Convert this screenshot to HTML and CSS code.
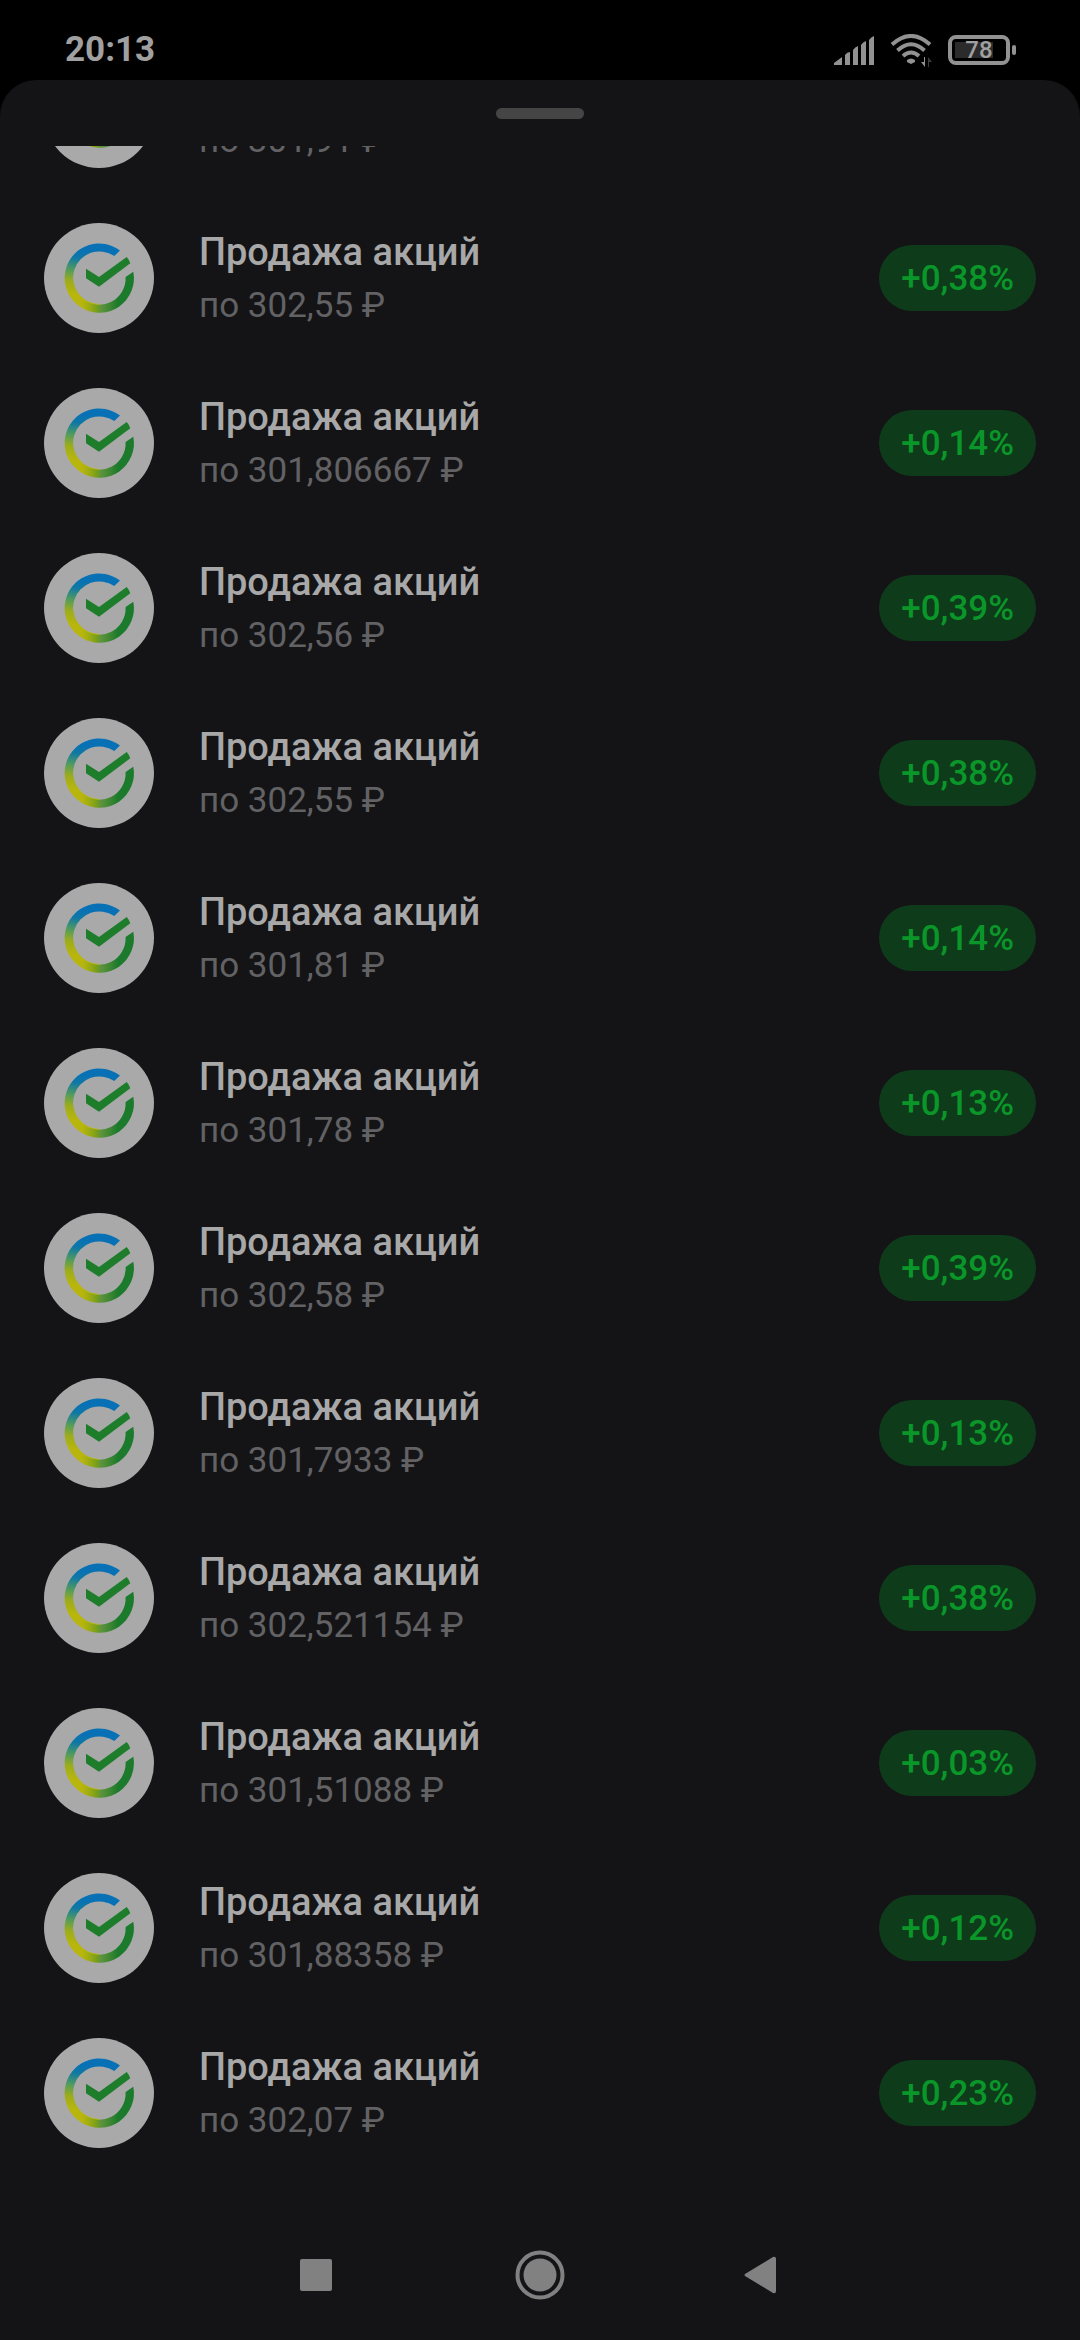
FILE: index.html
```
<!DOCTYPE html>
<html lang="ru">

<head>
    <meta charset="UTF-8">
    <meta name="viewport" content="width=device-width, initial-scale=1.0">
    <title>Продажа акций</title>
    <link rel="stylesheet" href="styles.css">
</head>

<body>
    <!-- Shared logo, used by every row -->
    <svg class="sprite" aria-hidden="true">
        <defs>
            <linearGradient id="ringSide" gradientUnits="userSpaceOnUse" x1="60" y1="24" x2="50" y2="84">
                <stop offset="0.1" stop-color="#0871b5" />
                <stop offset="0.25" stop-color="#0f78a4" />
                <stop offset="0.46" stop-color="#539c5c" />
                <stop offset="0.64" stop-color="#9cac1c" />
                <stop offset="0.85" stop-color="#b8b60c" />
            </linearGradient>
            <linearGradient id="ringBottom" gradientUnits="userSpaceOnUse" x1="38" y1="0" x2="74" y2="0">
                <stop offset="0" stop-color="#6f9c1c" stop-opacity="0" />
                <stop offset="0.5" stop-color="#4f8f22" stop-opacity="0.8" />
                <stop offset="1" stop-color="#1b7a2b" />
            </linearGradient>
        </defs>
        <symbol id="logo" viewBox="0 0 110 110">
            <circle cx="55" cy="55" r="55" fill="#a9a9aa" />
            <path fill="url(#ringSide)" d="M76 27.5A34.5 34.5 0 1 0 55 89.5V81A26.3 26.3 0 1 1 70.3 33z" />
            <path fill="url(#ringBottom)" d="M38 85A34.5 34.5 0 0 0 89.3 48.7L81.6 54A26.5 26.5 0 0 1 38 75.500z" />
            <path fill="#1d7d2b" d="M42 45.7L55 54L82.7 34Q85.2 36.8 86.3 40.3L55 63.7L42 55.3z" />
        </symbol>
    </svg>

    <header class="status-bar">
        <time class="clock">20:13</time>
        <div class="indicators">
            <svg class="signal" viewBox="0 0 40 29" aria-hidden="true">
                <path d="M0 29V27L8 21V29zM11 29V19Q13 16 16 16V29zM19 29V14Q21 11 24 10V29zM27 29V9Q29 6 32 5V29zM35 29V4Q37 1 40 0V29z" />
            </svg>
            <svg class="wifi" viewBox="0 0 42 33" aria-hidden="true">
                <g fill="none" stroke="#929292" stroke-width="4">
                    <path d="M2 10.500Q21 -6.500 40 10.500" />
                    <path d="M7.500 16.500Q21 4 34.500 16.500" />
                    <path d="M13 22Q21 15 29 22" />
                </g>
                <path d="M17 26Q21 23 25 26V28L21 30L17 28z" />
                <path d="M35 23V33L31 28H34V23z" />
                <path d="M38 33V23L42 28H39V33z" fill="#3c3c3c" />
            </svg>
            <div class="battery">78</div>
        </div>
    </header>

    <main class="sheet">
        <div class="handle"></div>
        <ul class="deals">
            <li class="deal">
                <svg class="logo" aria-hidden="true"><use href="#logo" /></svg>
                <div class="info">
                    <h2>Продажа акций</h2>
                    <p>по 301,91 ₽</p>
                </div>
            </li>
            <li class="deal">
                <svg class="logo" aria-hidden="true"><use href="#logo" /></svg>
                <div class="info">
                    <h2>Продажа акций</h2>
                    <p>по 302,55 ₽</p>
                </div>
                <span class="profit">+0,38%</span>
            </li>
            <li class="deal">
                <svg class="logo" aria-hidden="true"><use href="#logo" /></svg>
                <div class="info">
                    <h2>Продажа акций</h2>
                    <p>по 301,806667 ₽</p>
                </div>
                <span class="profit">+0,14%</span>
            </li>
            <li class="deal">
                <svg class="logo" aria-hidden="true"><use href="#logo" /></svg>
                <div class="info">
                    <h2>Продажа акций</h2>
                    <p>по 302,56 ₽</p>
                </div>
                <span class="profit">+0,39%</span>
            </li>
            <li class="deal">
                <svg class="logo" aria-hidden="true"><use href="#logo" /></svg>
                <div class="info">
                    <h2>Продажа акций</h2>
                    <p>по 302,55 ₽</p>
                </div>
                <span class="profit">+0,38%</span>
            </li>
            <li class="deal">
                <svg class="logo" aria-hidden="true"><use href="#logo" /></svg>
                <div class="info">
                    <h2>Продажа акций</h2>
                    <p>по 301,81 ₽</p>
                </div>
                <span class="profit">+0,14%</span>
            </li>
            <li class="deal">
                <svg class="logo" aria-hidden="true"><use href="#logo" /></svg>
                <div class="info">
                    <h2>Продажа акций</h2>
                    <p>по 301,78 ₽</p>
                </div>
                <span class="profit">+0,13%</span>
            </li>
            <li class="deal">
                <svg class="logo" aria-hidden="true"><use href="#logo" /></svg>
                <div class="info">
                    <h2>Продажа акций</h2>
                    <p>по 302,58 ₽</p>
                </div>
                <span class="profit">+0,39%</span>
            </li>
            <li class="deal">
                <svg class="logo" aria-hidden="true"><use href="#logo" /></svg>
                <div class="info">
                    <h2>Продажа акций</h2>
                    <p>по 301,7933 ₽</p>
                </div>
                <span class="profit">+0,13%</span>
            </li>
            <li class="deal">
                <svg class="logo" aria-hidden="true"><use href="#logo" /></svg>
                <div class="info">
                    <h2>Продажа акций</h2>
                    <p>по 302,521154 ₽</p>
                </div>
                <span class="profit">+0,38%</span>
            </li>
            <li class="deal">
                <svg class="logo" aria-hidden="true"><use href="#logo" /></svg>
                <div class="info">
                    <h2>Продажа акций</h2>
                    <p>по 301,51088 ₽</p>
                </div>
                <span class="profit">+0,03%</span>
            </li>
            <li class="deal">
                <svg class="logo" aria-hidden="true"><use href="#logo" /></svg>
                <div class="info">
                    <h2>Продажа акций</h2>
                    <p>по 301,88358 ₽</p>
                </div>
                <span class="profit">+0,12%</span>
            </li>
            <li class="deal">
                <svg class="logo" aria-hidden="true"><use href="#logo" /></svg>
                <div class="info">
                    <h2>Продажа акций</h2>
                    <p>по 302,07 ₽</p>
                </div>
                <span class="profit">+0,23%</span>
            </li>
        </ul>
    </main>

    <nav class="nav-bar">
        <button type="button" aria-label="Недавние">
            <svg viewBox="0 0 50 50"><rect x="5" y="9" width="32" height="32" rx="2" /></svg>
        </button>
        <button type="button" aria-label="Домой">
            <svg viewBox="0 0 50 50">
                <circle cx="25" cy="25" r="16.500" />
                <circle cx="25" cy="25" r="22.500" fill="none" stroke="#818181" stroke-width="4" />
            </svg>
        </button>
        <button type="button" aria-label="Назад">
            <svg viewBox="0 0 50 50"><path d="M10 24L38 7Q41 6 41 9V41Q41 44 38 43L10 26Q9 25 10 24z" /></svg>
        </button>
    </nav>
</body>

</html>
```
FILE: styles.css
```
* {
    box-sizing: border-box;
}

body {
    margin: 0;
    height: 100vh;
    display: flex;
    flex-direction: column;
    font-family: Roboto, "Noto Sans", sans-serif;
    background-color: #000;
    overflow: hidden;
}

.sprite {
    position: absolute;
    width: 0;
    height: 0;
}

/* Status bar */
.status-bar {
    display: flex;
    justify-content: space-between;
    align-items: center;
    height: 80px;
    padding: 20px 64px 0 65px;
    color: #a0a0a0;
}

.clock {
    font-size: 35px;
    font-weight: 700;
    line-height: 60px;
}

.indicators {
    display: flex;
    align-items: center;
    gap: 16px;
}

.indicators svg {
    fill: #929292;
}

.signal {
    width: 40px;
    height: 29px;
}

.wifi {
    width: 42px;
    height: 33px;
}

.battery {
    position: relative;
    width: 62px;
    height: 30px;
    margin-right: 6px;
    border: 4px solid #929292;
    border-radius: 8px;
    background: linear-gradient(#2b2b2b, #2b2b2b) 3px center / 38px 16px no-repeat;
    font-size: 24px;
    font-weight: 500;
    line-height: 23px;
    text-align: center;
}

.battery::after {
    content: "";
    position: absolute;
    top: 6px;
    right: -10px;
    width: 4px;
    height: 10px;
    border-radius: 2px;
    background: #929292;
}

/* Bottom sheet */
.sheet {
    flex: 1;
    min-height: 0;
    display: flex;
    flex-direction: column;
    border-radius: 36px 36px 0 0;
    background: #141416;
}

.handle {
    flex: none;
    width: 88px;
    height: 11px;
    margin: 28px auto 27px;
    border-radius: 6px;
    background: #454546;
}

/* Scrolled to the last deal */
.deals {
    flex: 1;
    min-height: 0;
    display: flex;
    flex-direction: column;
    justify-content: flex-end;
    margin: 0;
    padding: 0 44px 35px;
    list-style: none;
    overflow: hidden;
}

.deal {
    flex: none;
    display: flex;
    align-items: center;
    height: 165px;
}

.logo {
    flex: none;
    width: 110px;
    height: 110px;
    margin-right: 45px;
}

.info {
    flex: 1;
    padding-top: 3px;
}

.info h2,
.info p {
    margin: 0;
    line-height: 54px;
}

.info h2 {
    font-size: 38px;
    font-weight: 500;
    color: #a8a8a9;
}

.info p {
    font-size: 35px;
    color: #626265;
}

.profit {
    padding: 2px 22px 0;
    border-radius: 33px;
    background: #0e3c1b;
    color: #0b962a;
    font-size: 35px;
    font-weight: 500;
    line-height: 64px;
}

/* System navigation */
.nav-bar {
    flex: none;
    display: flex;
    justify-content: center;
    gap: 170px;
    height: 130px;
    background: #141416;
}

.nav-bar button {
    width: 50px;
    padding: 0;
    border: none;
    background: none;
    cursor: pointer;
}

.nav-bar svg {
    display: block;
    width: 50px;
    height: 50px;
    fill: #818181;
}
```
